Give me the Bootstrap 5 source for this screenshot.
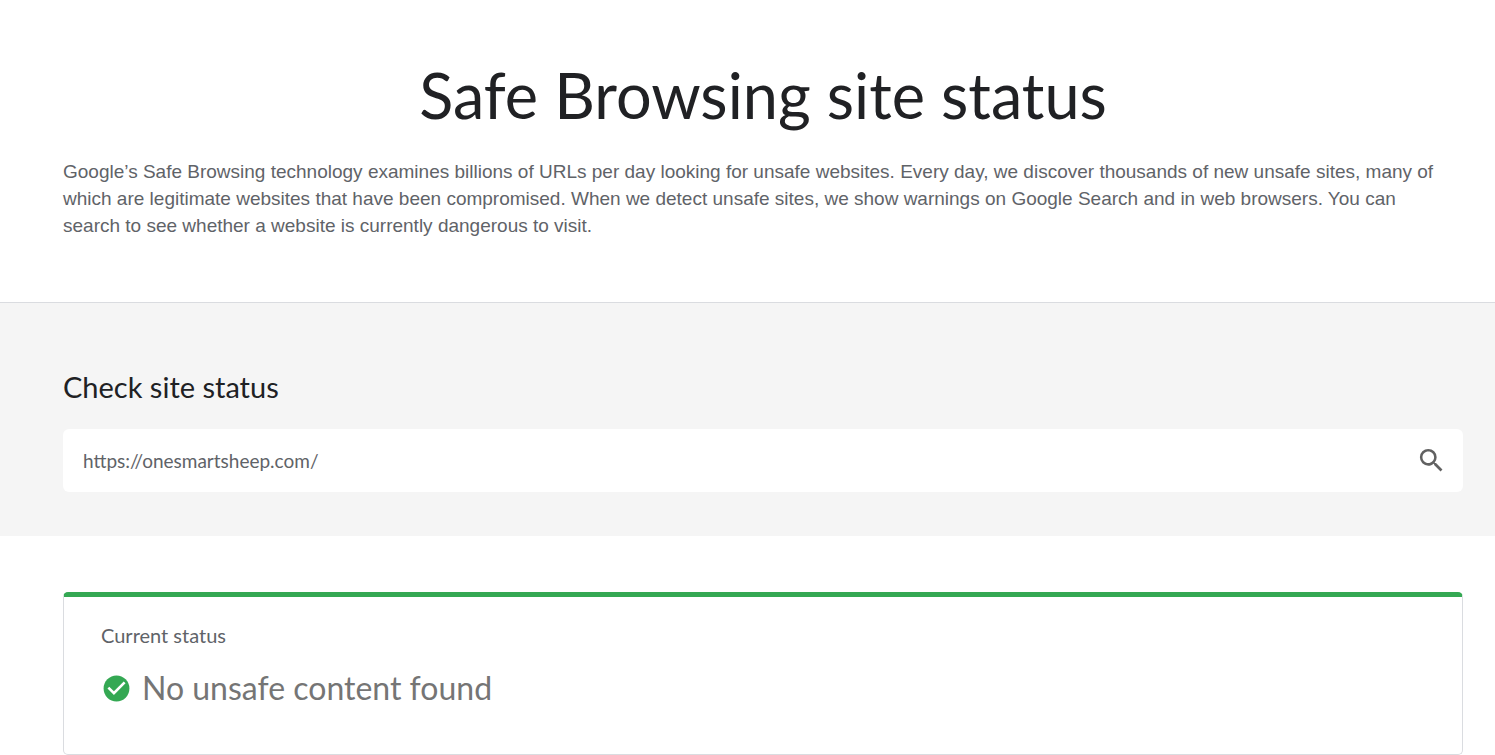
<!DOCTYPE html>
<html lang="en">
<head>
<meta charset="utf-8">
<meta name="viewport" content="width=device-width, initial-scale=1">
<title>Safe Browsing site status</title>
<link href="https://cdn.jsdelivr.net/npm/bootstrap@5.3.0/dist/css/bootstrap.min.css" rel="stylesheet">
<style>
  body { font-family: "Google Sans", Lato, sans-serif; color: #5f6368; background: #fff; }
  .page-gutter { padding-left: 63px; padding-right: 32px; }
  .intro { padding-top: 55px; padding-bottom: 63px; border-bottom: 1px solid #dadce0; }
  .page-title { font-size: 63px; line-height: 80px; font-weight: 400; color: #202124; margin-bottom: 23px; }
  .intro-text { font-family: "Liberation Sans", Arial, sans-serif; font-size: 19px; line-height: 27px; }
  .checker { background: #f5f5f5; padding-top: 66px; padding-bottom: 44px; }
  .section-title { font-size: 29px; line-height: 36px; font-weight: 400; color: #202124; margin-bottom: 24px; }
  .search-box { height: 63px; border-radius: 6px; padding: 0 16px 0 20px; }
  .search-box .form-control { font-size: 19px; line-height: 27px; color: #5f6368; }
  .search-box svg { width: 31px; height: 31px; fill: #616161; }
  .results { padding-top: 56px; }
  .status-card { border: 1px solid #dadce0; border-top: 5px solid #34a853; border-radius: 5px; padding: 24px 37px 46px; }
  .status-label { font-size: 20px; line-height: 28px; margin-bottom: 19px; font-weight: 400; }
  .status-text { font-size: 32px; line-height: 40px; color: #757575; }
  .status-line { gap: 10px; }
  .status-line svg { width: 31px; height: 31px; }
</style>
</head>
<body>
<header class="intro page-gutter">
  <h1 class="page-title text-center">Safe Browsing site status</h1>
  <p class="intro-text mb-0 pe-4">Google’s Safe Browsing technology examines billions of URLs per day looking for unsafe websites. Every day, we discover thousands of new unsafe sites, many of which are legitimate websites that have been compromised. When we detect unsafe sites, we show warnings on Google Search and in web browsers. You can search to see whether a website is currently dangerous to visit.</p>
</header>
<main>
  <section class="checker page-gutter">
    <h2 class="section-title"><label for="site-url">Check site status</label></h2>
    <form class="search-box d-flex align-items-center bg-white">
      <input id="site-url" type="text" class="form-control border-0 shadow-none p-0 flex-grow-1" value="https://onesmartsheep.com/">
      <button type="button" class="btn border-0 p-0 d-flex" aria-label="Search">
        <svg viewBox="0 0 24 24" aria-hidden="true"><path d="M15.5 14h-.79l-.28-.27A6.47 6.47 0 0 0 16 9.5 6.5 6.5 0 1 0 9.5 16c1.61 0 3.09-.59 4.23-1.57l.27.28v.79l5 4.99L20.49 19l-4.99-5zm-6 0C7.01 14 5 11.99 5 9.5S7.01 5 9.5 5 14 7.01 14 9.5 11.99 14 9.5 14z"/></svg>
      </button>
    </form>
  </section>
  <section class="results page-gutter">
    <div class="status-card">
      <h3 class="status-label">Current status</h3>
      <div class="status-line d-flex align-items-center">
        <svg viewBox="0 0 24 24" aria-hidden="true"><circle cx="12" cy="12" r="10" fill="#34a853"/><path d="M10 17l-5-5 1.41-1.41L10 14.17l7.59-7.59L19 8z" fill="#fff"/></svg>
        <span class="status-text">No unsafe content found</span>
      </div>
    </div>
  </section>
</main>
<script src="https://cdn.jsdelivr.net/npm/bootstrap@5.3.0/dist/js/bootstrap.bundle.min.js"></script>
</body>
</html>
